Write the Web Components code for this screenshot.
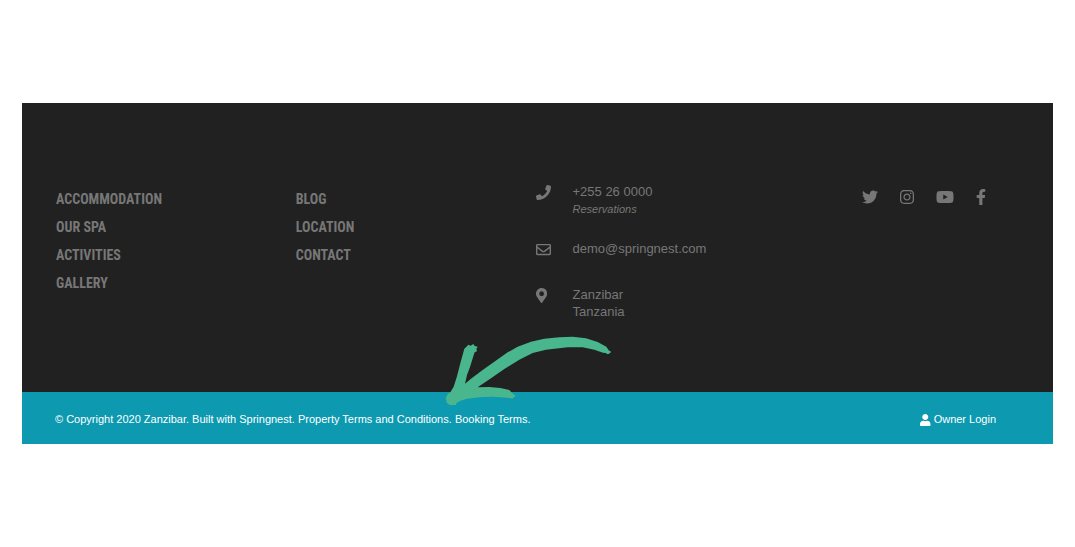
<!DOCTYPE html>
<html lang="en">
<head>
<meta charset="utf-8">
<title>Zanzibar</title>
<style>
body { margin: 0; padding: 103px 22px; background: #fff; font-family: "Liberation Sans", Arial, sans-serif; font-size: 13px; line-height: 17px; color: #777; }
</style>
</head>
<body>
<site-footer>
  <footer-menu label="Explore">
    <menu-link href="#accommodation">ACCOMMODATION</menu-link>
    <menu-link href="#spa">OUR SPA</menu-link>
    <menu-link href="#activities">ACTIVITIES</menu-link>
    <menu-link href="#gallery">GALLERY</menu-link>
  </footer-menu>
  <footer-menu label="About">
    <menu-link href="#blog">BLOG</menu-link>
    <menu-link href="#location">LOCATION</menu-link>
    <menu-link href="#contact">CONTACT</menu-link>
  </footer-menu>
  <contact-details></contact-details>
  <social-links></social-links>
  <copyright-bar slot="bar"></copyright-bar>
</site-footer>
<script>
const icons = {
  twitter: [512, "M459.37 151.716c.325 4.548.325 9.097.325 13.645 0 138.72-105.583 298.558-298.558 298.558-59.452 0-114.68-17.219-161.137-47.106 8.447.974 16.568 1.299 25.34 1.299 49.055 0 94.213-16.568 130.274-44.832-46.132-.975-84.792-31.188-98.112-72.772 6.498.974 12.995 1.624 19.818 1.624 9.421 0 18.843-1.3 27.614-3.573-48.081-9.747-84.143-51.98-84.143-102.985v-1.299c13.969 7.797 30.214 12.67 47.431 13.319-28.264-18.843-46.781-51.005-46.781-87.391 0-19.492 5.197-37.36 14.294-52.954 51.655 63.675 129.3 105.258 216.365 109.807-1.624-7.797-2.599-15.918-2.599-24.04 0-57.828 46.782-104.934 104.934-104.934 30.213 0 57.502 12.67 76.67 33.137 23.715-4.548 46.456-13.32 66.599-25.34-7.798 24.366-24.366 44.833-46.132 57.827 21.117-2.273 41.584-8.122 60.426-16.243-14.292 20.791-32.161 39.308-52.628 54.253z"],
  instagram: [448, "M224.1 141c-63.6 0-114.9 51.3-114.9 114.9s51.3 114.9 114.9 114.9S339 319.5 339 255.9 287.7 141 224.1 141zm0 189.600c-41.100 0-74.700-33.500-74.700-74.700s33.500-74.700 74.700-74.700 74.700 33.500 74.700 74.700-33.600 74.700-74.700 74.700zm146.400-194.300c0 14.900-12 26.800-26.800 26.800-14.900 0-26.800-12-26.800-26.800s12-26.800 26.800-26.800 26.800 12 26.800 26.800zm76.100 27.200c-1.700-35.900-9.900-67.700-36.200-93.900-26.200-26.200-58-34.400-93.900-36.200-37-2.100-147.900-2.100-184.900 0-35.800 1.700-67.600 9.900-93.900 36.100s-34.400 58-36.200 93.900c-2.100 37-2.100 147.900 0 184.900 1.700 35.900 9.900 67.700 36.200 93.900s58 34.400 93.900 36.200c37 2.100 147.900 2.100 184.900 0 35.900-1.700 67.700-9.900 93.900-36.200 26.200-26.200 34.400-58 36.200-93.900 2.100-37 2.100-147.800 0-184.800zM398.800 388c-7.800 19.600-22.900 34.700-42.600 42.600-29.500 11.700-99.500 9-132.100 9s-102.700 2.600-132.100-9c-19.600-7.800-34.700-22.900-42.600-42.600-11.700-29.500-9-99.500-9-132.100s-2.600-102.700 9-132.100c7.800-19.600 22.900-34.700 42.600-42.600 29.500-11.700 99.500-9 132.100-9s102.700-2.600 132.100 9c19.600 7.800 34.700 22.900 42.600 42.600 11.700 29.500 9 99.500 9 132.100s2.700 102.700-9 132.100z"],
  youtube: [576, "M549.655 124.083c-6.281-23.650-24.787-42.276-48.284-48.597C458.781 64 288 64 288 64S117.220 64 74.629 75.486c-23.497 6.322-42.003 24.947-48.284 48.597-11.412 42.867-11.412 132.305-11.412 132.305s0 89.438 11.412 132.305c6.281 23.650 24.787 41.500 48.284 47.821C117.220 448 288 448 288 448s170.780 0 213.371-11.486c23.497-6.321 42.003-24.171 48.284-47.821 11.412-42.867 11.412-132.305 11.412-132.305s0-89.438-11.412-132.305zM232.145 337.591V175.185l142.739 81.205z"],
  facebook: [320, "M279.140 288l14.220-92.660h-88.910v-60.130c0-25.350 12.420-50.060 52.240-50.060h40.420V6.260S260.430 0 225.360 0c-73.220 0-121.080 44.380-121.080 124.720v70.620H22.890V288h81.390v224h100.170V288z"],
  phone: [512, "M493.400 24.600l-104-24c-11.300-2.600-22.900 3.300-27.500 13.900l-48 112c-4.200 9.800-1.400 21.300 6.900 28l60.600 49.600c-36 76.700-98.900 140.500-177.200 177.200l-49.600-60.600c-6.800-8.300-18.200-11.100-28-6.900l-112 48C3.900 366.500-2 378.100.6 389.400l24 104C27.100 504.200 36.700 512 48 512c256.100 0 464-207.500 464-464 0-11.200-7.700-20.900-18.600-23.400z"],
  mail: [512, "M464 64H48C21.490 64 0 85.490 0 112v288c0 26.510 21.490 48 48 48h416c26.510 0 48-21.490 48-48V112c0-26.510-21.490-48-48-48zm0 48v40.805c-22.422 18.259-58.168 46.651-134.587 106.490-16.841 13.247-50.201 45.072-73.413 44.701-23.208.375-56.579-31.459-73.413-44.701C106.180 199.465 70.425 171.067 48 152.805V112h416zM48 400V214.398c22.914 18.251 55.409 43.862 104.938 82.646 21.857 17.205 60.134 55.186 103.062 54.955 42.717.231 80.509-37.199 103.053-54.947 49.528-38.783 82.032-64.401 104.947-82.653V400H48z"],
  pin: [384, "M172.268 501.670C26.970 291.031 0 269.413 0 192 0 85.961 85.961 0 192 0s192 85.961 192 192c0 77.413-26.970 99.031-172.268 309.670-9.535 13.774-29.930 13.773-39.464 0zM192 272c44.183 0 80-35.817 80-80s-35.817-80-80-80-80 35.817-80 80 35.817 80 80 80z"],
  user: [448, "M224 256c70.700 0 128-57.300 128-128S294.700 0 224 0 96 57.300 96 128s57.300 128 128 128zm89.600 32h-16.700c-22.200 10.200-46.900 16-72.900 16s-50.600-5.800-72.900-16h-16.700C60.200 288 0 348.200 0 422.400V464c0 26.500 21.500 48 48 48h352c26.500 0 48-21.500 48-48v-41.600c0-74.200-60.200-134.400-134.400-134.400z"]
};

const define = (name, render) => customElements.define(name, class extends HTMLElement {
  constructor() {
    super();
    this.attachShadow({ mode: "open" });
  }
  connectedCallback() {
    this.shadowRoot.innerHTML = render(this);
  }
});

define("site-icon", el => {
  const [width, path] = icons[el.getAttribute("name")];
  return `<style>
    :host { display: inline-block; line-height: 0; }
    svg { display: block; height: var(--icon-size, 16px); fill: currentColor; }
  </style><svg viewBox="0 0 ${width} 512" aria-hidden="true"><path d="${path}"/></svg>`;
});

define("menu-link", el => `<style>
    :host { display: block; }
    a { color: inherit; text-decoration: none; }
  </style><a href="${el.getAttribute("href")}"><slot></slot></a>`);

define("footer-menu", el => `<style>
    :host { display: block; padding-top: 2px; font: bold 14px/28px "Roboto Condensed", Roboto, sans-serif; }
  </style><nav aria-label="${el.getAttribute("label")}"><slot></slot></nav>`);

define("contact-details", () => `<style>
    :host { display: block; --icon-size: 15px; }
    address { display: grid; grid-template-columns: 16px 1fr; grid-template-rows: 57px 46px auto; column-gap: 21px; font-style: normal; }
    site-icon { padding-top: 2px; }
    a { color: inherit; text-decoration: none; }
    em { display: block; font-size: 11px; line-height: 18px; }
  </style>
  <address>
    <site-icon name="phone"></site-icon><div><a href="tel:+255260000">+255 26 0000</a><em>Reservations</em></div>
    <site-icon name="mail"></site-icon><div><a href="mailto:demo@springnest.com">demo@springnest.com</a></div>
    <site-icon name="pin"></site-icon><div>Zanzibar<br>Tanzania</div>
  </address>`);

define("social-links", () => `<style>
    :host { display: block; }
    nav { display: flex; justify-content: flex-end; gap: 22px; padding: 6px 29px 0 0; }
    a { color: inherit; }
  </style>
  <nav aria-label="Social media">
    <a href="#twitter" aria-label="Twitter"><site-icon name="twitter"></site-icon></a>
    <a href="#instagram" aria-label="Instagram"><site-icon name="instagram"></site-icon></a>
    <a href="#youtube" aria-label="YouTube"><site-icon name="youtube"></site-icon></a>
    <a href="#facebook" aria-label="Facebook"><site-icon name="facebook"></site-icon></a>
  </nav>`);

define("hand-arrow", () => `<style>
    :host { display: block; width: 166px; height: 70px; }
    svg { display: block; }
  </style>
  <svg width="166" height="70" viewBox="42 33 498 210" fill="#49b68d" aria-hidden="true">
    <path d="M68 185L78 154 88 115 95 89 100 71 108 64 112 59 119 62 127 57 131 63 140 65 136 72 138 79 131 82 127 94 117 126 108 150 102 176 120 161 155 135 190 110 230 82 260 65 300 50 340 41 385 37 425 35 465 40 500 51 526 65 533 76 540 80 537 85 530 88 524 84 516 83 490 74 455 67 410 67 345 74 305 84 265 104 220 132 180 160 140 187 175 186 208 189 235 195 241 202 246 206 254 212 249 217 244 221 230 218 185 215 145 217 105 222 87 228 76 235 74 240 56 240 47 233 44 219 50 208 58 202Z"/>
  </svg>`);

define("copyright-bar", () => `<style>
    :host { display: block; position: relative; background: #0d99b0; color: #fff; }
    div { display: flex; justify-content: space-between; gap: 22px; padding: 19px 57px 16px 33px; font-size: 11px; line-height: 17px; }
    p { margin: 0; }
    a { color: inherit; text-decoration: none; }
    .login { display: flex; align-items: center; gap: 3px; --icon-size: 12px; }
    hand-arrow { position: absolute; left: 41%; bottom: 38px; }
  </style>
  <div>
    <p>© Copyright 2020 Zanzibar. Built with <a href="#springnest">Springnest</a>. <a href="#terms">Property Terms and Conditions</a>. <a href="#booking-terms">Booking Terms</a>.</p>
    <a class="login" href="#login"><site-icon name="user"></site-icon>Owner Login</a>
  </div>
  <hand-arrow></hand-arrow>`);

define("site-footer", () => `<style>
    :host { display: block; background: #212121; }
    .columns { display: grid; grid-template-columns: repeat(4, minmax(0, 1fr)); padding: 80px 38px 72px 34px; }
  </style>
  <footer><div class="columns"><slot></slot></div><slot name="bar"></slot></footer>`);
</script>
</body>
</html>
